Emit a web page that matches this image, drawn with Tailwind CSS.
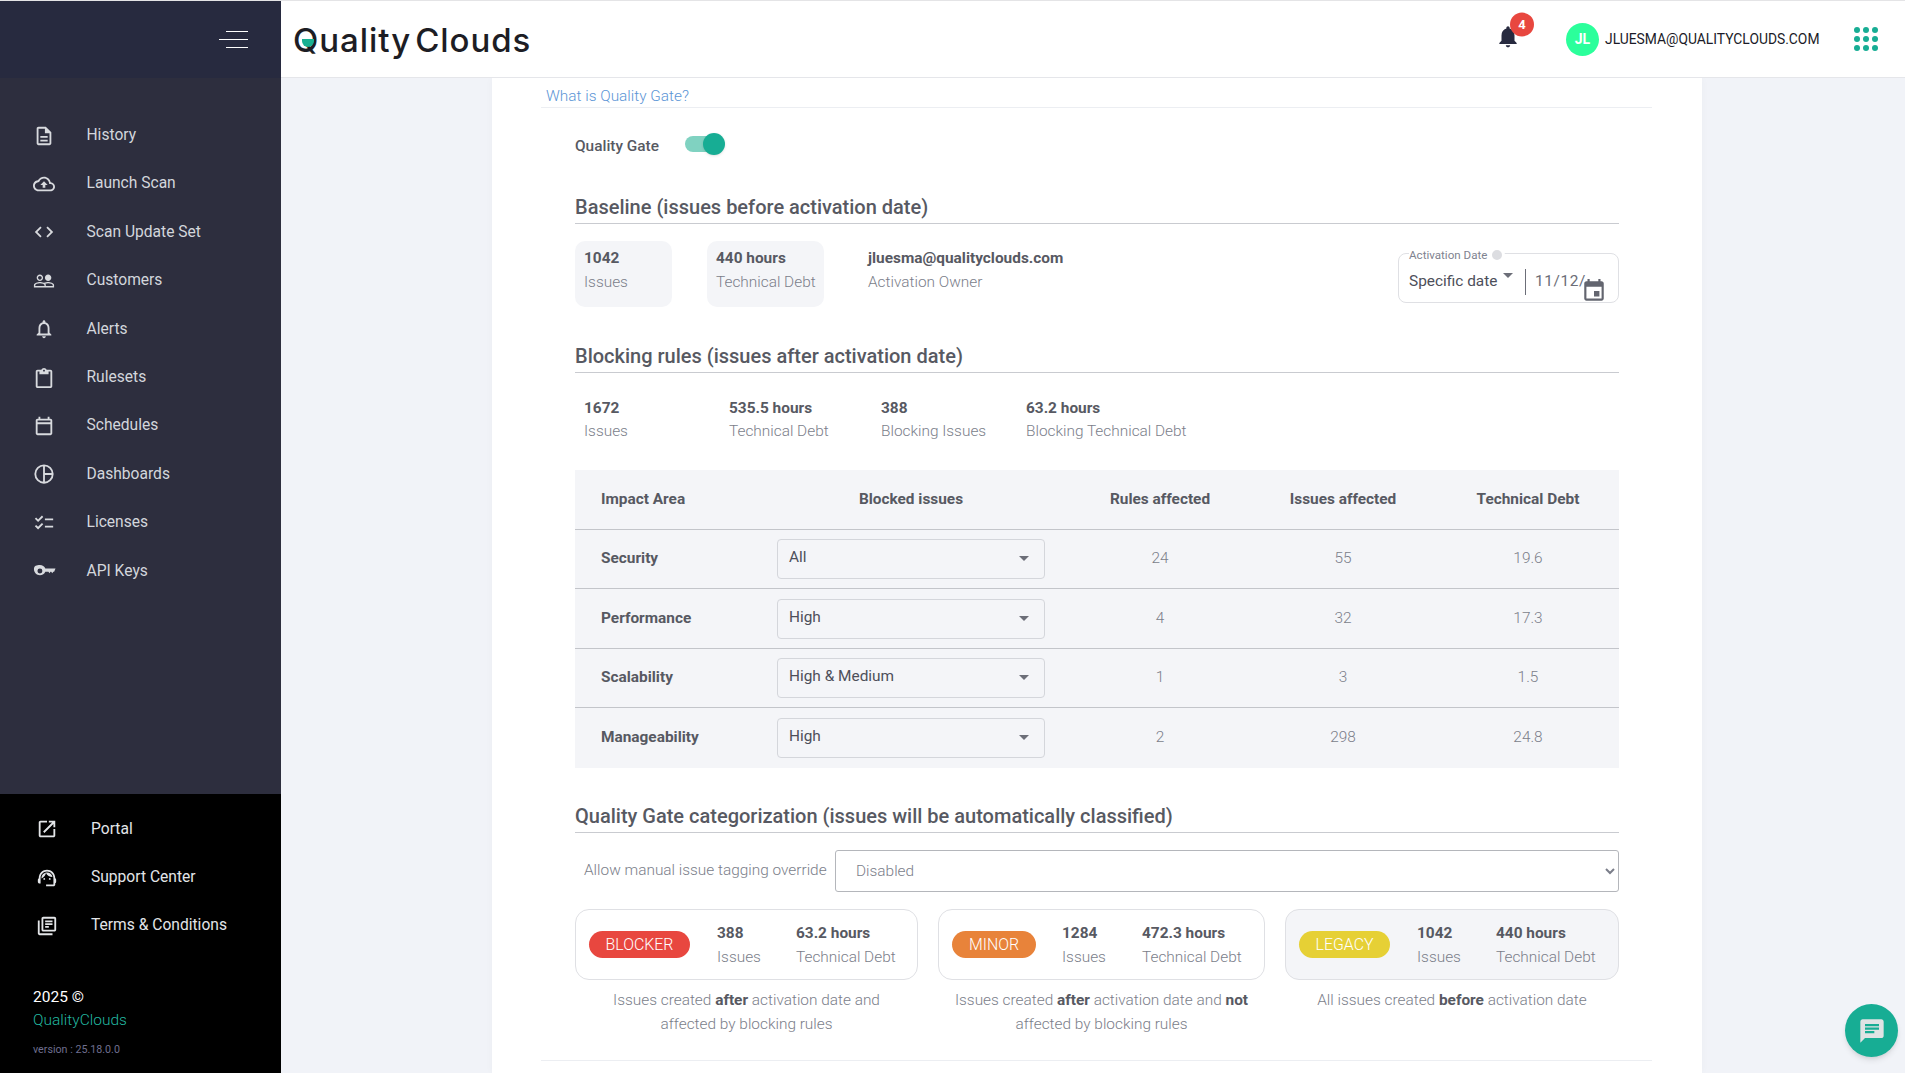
<!DOCTYPE html>
<html lang="en">
<head>
<meta charset="utf-8">
<title>Quality Gate</title>
<script src="https://cdn.jsdelivr.net/npm/@tailwindcss/browser@4"></script>
</head>
<body class="m-0 font-['Roboto',sans-serif]">
<div class="relative w-[1905px] h-[1073px] overflow-hidden flex border-t border-[#e4e4e6] bg-[#f1f3f8]">
  <aside class="w-[281px] shrink-0 flex flex-col">
    <div class="h-[77px] bg-[#272a3f] flex items-center justify-end pr-[33px]">
      <div class="flex flex-col items-end gap-[7px] w-[29px]">
        <span class="block h-px w-[22px] bg-white"></span>
        <span class="block h-px w-[29px] bg-white"></span>
        <span class="block h-px w-[22px] bg-white"></span>
      </div>
    </div>
    <nav class="flex-1 bg-[#2d2e3e] pt-[33.5px] text-[15.6px] text-[#d3d6dc]">
      <a class="flex items-center h-[48.4px] pl-[33px] gap-[31.5px]"><svg class="w-[22px] h-[22px]" viewBox="0 0 24 24" fill="#d8dade"><path d="M8 16h8v2H8zm0-4h8v2H8zm6-10H6c-1.1 0-2 .9-2 2v16c0 1.1.89 2 1.99 2H18c1.1 0 2-.9 2-2V8l-6-6zm4 18H6V4h7v5h5v11z"/></svg>History</a>
      <a class="flex items-center h-[48.4px] pl-[33px] gap-[31.5px]"><svg class="w-[22px] h-[22px]" viewBox="0 0 24 24" fill="#d8dade"><path d="M19.35 10.04C18.67 6.59 15.64 4 12 4 9.11 4 6.6 5.64 5.35 8.04 2.34 8.36 0 10.91 0 14c0 3.31 2.69 6 6 6h13c2.76 0 5-2.24 5-5 0-2.64-2.05-4.78-4.65-4.96zM19 18H6c-2.21 0-4-1.79-4-4 0-2.05 1.53-3.76 3.56-3.97l1.07-.11.5-.95C8.08 7.14 9.94 6 12 6c2.62 0 4.88 1.86 5.39 4.43l.3 1.5 1.53.11c1.56.1 2.78 1.41 2.78 2.96 0 1.65-1.35 3-3 3zM8 13h2.55v3h2.9v-3H16l-4-4z"/></svg>Launch Scan</a>
      <a class="flex items-center h-[48.4px] pl-[33px] gap-[31.5px]"><svg class="w-[22px] h-[22px]" viewBox="0 0 24 24" fill="#d8dade"><path d="M9.4 16.6L4.8 12l4.6-4.6L8 6l-6 6 6 6 1.4-1.4zm5.2 0l4.6-4.6-4.6-4.6L16 6l6 6-6 6-1.4-1.4z"/></svg>Scan Update Set</a>
      <a class="flex items-center h-[48.4px] pl-[33px] gap-[31.5px]"><svg class="w-[22px] h-[22px]" viewBox="0 0 24 24" fill="#d8dade"><path d="M16.5 13c-1.2 0-3.07.34-4.5 1-1.43-.67-3.3-1-4.5-1C5.33 13 1 14.08 1 16.25V19h22v-2.75c0-2.17-4.33-3.25-6.5-3.25zm-4 4.500h-10v-1.250c0-.54 2.560-1.750 5-1.750s5 1.210 5 1.750v1.250zm9 0H14v-1.250c0-.46-.2-.86-.52-1.220.88-.3 1.960-.53 3.020-.53 2.440 0 5 1.210 5 1.750v1.250zM7.500 12c1.930 0 3.500-1.570 3.500-3.500S9.430 5 7.500 5 4 6.570 4 8.500 5.570 12 7.500 12zm0-5.500c1.100 0 2 .9 2 2s-.9 2-2 2-2-.9-2-2 .9-2 2-2zm9 5.500c1.930 0 3.500-1.570 3.500-3.500S18.430 5 16.500 5 13 6.570 13 8.500s1.570 3.500 3.500 3.500z"/></svg>Customers</a>
      <a class="flex items-center h-[48.4px] pl-[33px] gap-[31.5px]"><svg class="w-[22px] h-[22px]" viewBox="0 0 24 24" fill="#d8dade"><path d="M12 22c1.1 0 2-.9 2-2h-4c0 1.1.89 2 2 2zm6-6v-5c0-3.07-1.64-5.64-4.5-6.32V4c0-.83-.67-1.5-1.5-1.5s-1.5.67-1.5 1.5v.68C7.63 5.36 6 7.92 6 11v5l-2 2v1h16v-1l-2-2zm-2 1H8v-6c0-2.48 1.51-4.5 4-4.5s4 2.02 4 4.5v6z"/></svg>Alerts</a>
      <a class="flex items-center h-[48.4px] pl-[33px] gap-[31.5px]"><svg class="w-[22px] h-[22px]" viewBox="0 0 24 24" fill="#d8dade"><path d="M19 3h-4.18C14.4 1.84 13.3 1 12 1s-2.4.84-2.82 2H5c-1.1 0-2 .9-2 2v16c0 1.1.9 2 2 2h14c1.1 0 2-.9 2-2V5c0-1.1-.9-2-2-2zm0 18H5V5h2v3h10V5h2v16zM12 3c.55 0 1 .45 1 1s-.45 1-1 1-1-.45-1-1 .45-1 1-1z"/></svg>Rulesets</a>
      <a class="flex items-center h-[48.4px] pl-[33px] gap-[31.5px]"><svg class="w-[22px] h-[22px]" viewBox="0 0 24 24" fill="#d8dade"><path d="M19 4h-1V2h-2v2H8V2H6v2H5c-1.1 0-2 .9-2 2v14c0 1.1.9 2 2 2h14c1.1 0 2-.9 2-2V6c0-1.1-.9-2-2-2zm0 16H5V10h14v10zm0-12H5V6h14v2z"/></svg>Schedules</a>
      <a class="flex items-center h-[48.4px] pl-[33px] gap-[31.5px]"><svg class="w-[22px] h-[22px]" viewBox="0 0 24 24" fill="none" stroke="#d8dade" stroke-width="2"><circle cx="12" cy="12" r="9.5"/><path d="M12 2.500v19M12 12h9.500"/></svg>Dashboards</a>
      <a class="flex items-center h-[48.4px] pl-[33px] gap-[31.5px]"><svg class="w-[22px] h-[22px]" viewBox="0 0 24 24" fill="#d8dade"><path d="M22 7h-9v2h9V7zm0 8h-9v2h9v-2zM5.54 11L2 7.46l1.41-1.41 2.12 2.12 4.24-4.24 1.41 1.41L5.54 11zm0 8L2 15.46l1.41-1.41 2.12 2.12 4.24-4.24 1.41 1.41L5.54 19z"/></svg>Licenses</a>
      <a class="flex items-center h-[48.4px] pl-[33px] gap-[31.5px]"><svg class="w-[23px] h-[22px]" viewBox="0 0 24 24" fill="#d8dade"><path fill-rule="evenodd" d="M7 5.500c2.700 0 5 1.500 5.900 3.700H24l-1.500 3.600H21.500l-1 1.700-1.200-1.700h-.8l-1 1.700-1.200-1.700h-3.400c-.9 2.200-3.200 3.700-5.900 3.700-3.600 0-6.500-2.900-6.500-6.500S3.400 5.500 7 5.500zm0 3.800a2.700 2.700 0 1 0 0 5.400 2.700 2.700 0 0 0 0-5.400z"/></svg><span class="-ml-px">API Keys</span></a>
    </nav>
    <div class="h-[279px] bg-black pt-[11px] text-[#e3e5e8] text-[15.6px]">
      <a class="flex items-center h-[48.4px] pl-[36px] gap-[33px]"><svg class="w-[22px] h-[22px]" viewBox="0 0 24 24" fill="#e3e5e8"><path d="M19 19H5V5h7V3H5c-1.11 0-2 .9-2 2v14c0 1.1.89 2 2 2h14c1.1 0 2-.9 2-2v-7h-2v7zM14 3v2h3.590l-9.830 9.830 1.410 1.410L19 6.410V10h2V3h-7z"/></svg>Portal</a>
      <a class="flex items-center h-[48.4px] pl-[36px] gap-[33px]"><svg class="w-[22px] h-[22px]" viewBox="0 0 24 24" fill="#e3e5e8"><path d="M21 12.220C21 6.730 16.740 3 12 3c-4.690 0-9 3.650-9 9.280-.6.340-1 .980-1 1.720v2c0 1.100.9 2 2 2h1v-6.100c0-3.870 3.130-7 7-7s7 3.130 7 7V19h-8v2h8c1.100 0 2-.9 2-2v-1.220c.590-.310 1-.920 1-1.640v-2.300c0-.7-.410-1.310-1-1.620z"/><circle cx="9" cy="13" r="1"/><circle cx="15" cy="13" r="1"/><path d="M18 11.030C17.520 8.180 15.040 6 12.050 6c-3.030 0-6.290 2.510-6.030 6.450 2.470-1.010 4.330-3.210 4.860-5.890 1.310 2.630 4 4.440 7.120 4.470z"/></svg>Support Center</a>
      <a class="flex items-center h-[48.4px] pl-[36px] gap-[33px]"><svg class="w-[22px] h-[22px]" viewBox="0 0 24 24" fill="#e3e5e8"><path d="M4 6H2v14c0 1.100.9 2 2 2h14v-2H4V6zm16-4H8c-1.100 0-2 .9-2 2v12c0 1.100.9 2 2 2h12c1.100 0 2-.9 2-2V4c0-1.100-.9-2-2-2zm0 14H8V4h12v12zM10 9h8v2h-8zm0 3h4v2h-4zm0-6h8v2h-8z"/></svg>Terms &amp; Conditions</a>
      <div class="pl-[33px] mt-[36px] text-[15.5px] leading-[23px] text-white">2025 ©</div>
      <div class="pl-[33px] text-[15.5px] leading-[23px] font-light text-[#22b8a0]">QualityClouds</div>
      <div class="pl-[33px] mt-[10px] text-[10.7px] leading-[16px] text-[#6f6f8f]">version : 25.18.0.0</div>
    </div>
  </aside>

  <div class="flex-1 flex flex-col min-w-0">
    <header class="relative z-10 h-[77px] shrink-0 bg-white border-b border-[#e5e6ea] flex items-center pl-[12px]">
      <div class="relative mt-[2px] font-['Inter',sans-serif] font-medium text-[33px] tracking-[0.95px] text-[#1d1d24] leading-none">
        Quality<span class="ml-[4px]">Clouds</span>
        <span class="absolute left-[9px] top-[15px] w-[12px] h-[8px] rounded-b-[8px] bg-[#19b092]"></span>
      </div>
      <div class="ml-auto flex items-center">
        <div class="relative w-[24px] h-[24px] mr-[47px] -translate-y-[3.5px]">
          <svg class="w-[26px] h-[26px]" viewBox="0 0 24 24" fill="#272a3f"><path d="M12 22c1.100 0 2-.9 2-2h-4c0 1.100.89 2 2 2zm6-6v-5c0-3.070-1.640-5.640-4.500-6.320V4c0-.83-.67-1.500-1.500-1.500s-1.500.67-1.500 1.500v.68C7.630 5.360 6 7.920 6 11v5l-2 2v1h16v-1l-2-2z"/></svg>
          <span class="absolute left-[15px] top-[-11px] w-[24px] h-[24px] rounded-full bg-[#e8473f] text-white text-[13px] font-bold flex items-center justify-center">4</span>
        </div>
        <div class="w-[33px] h-[33px] rounded-full bg-[#2bff9b] text-white text-[14px] font-bold flex items-center justify-center">JL</div>
        <span class="ml-[6px] text-[13.85px] text-[#1b1b28] w-[215px]">JLUESMA@QUALITYCLOUDS.COM</span>
        <div class="ml-[34px] mr-[27px] grid grid-cols-3 gap-[3px] w-[24px]">
          <i class="w-[6px] h-[6px] rounded-full bg-[#17ad94]"></i><i class="w-[6px] h-[6px] rounded-full bg-[#17ad94]"></i><i class="w-[6px] h-[6px] rounded-full bg-[#17ad94]"></i>
          <i class="w-[6px] h-[6px] rounded-full bg-[#17ad94]"></i><i class="w-[6px] h-[6px] rounded-full bg-[#17ad94]"></i><i class="w-[6px] h-[6px] rounded-full bg-[#17ad94]"></i>
          <i class="w-[6px] h-[6px] rounded-full bg-[#17ad94]"></i><i class="w-[6px] h-[6px] rounded-full bg-[#17ad94]"></i><i class="w-[6px] h-[6px] rounded-full bg-[#17ad94]"></i>
        </div>
      </div>
    </header>

    <main class="flex-1 min-h-0 overflow-hidden pl-[211px]">
      <div class="w-[1210px] h-full bg-white pl-[49px] pr-[50px] text-[15.4px] text-[#575962] shadow-[0_0_8px_rgba(0,0,0,0.03)]">
        <div class="h-[30px] border-b border-[#eceef2] pl-[5px] pt-[8px] leading-[20px] font-light text-[#5b95d6]">What is Quality Gate?</div>
        <div class="ml-[34px] mr-[33px]">
          <div class="flex items-center h-[22px] mt-[25px] font-medium">
            <span class="w-[110px] mt-[5px]">Quality Gate</span>
            <span class="relative block w-[38px] h-[16px] rounded-full bg-[#80d2c1]"><span class="absolute right-[-2px] top-[-3px] w-[22px] h-[22px] rounded-full bg-[#17ad94] shadow-sm"></span></span>
          </div>

          <h2 class="mt-[36px] h-[33px] border-b border-[#c9cbd0] text-[20px] font-medium leading-[32px] text-[#575962]">Baseline (issues before activation date)</h2>
          <div class="relative flex items-start mt-[17px] h-[66px]">
            <div class="w-[97px] h-[66px] rounded-[10px] bg-[#f4f5f8] pl-[9px] pt-[6px]"><b class="block font-bold leading-[23px]">1042</b><span class="block font-light text-[#7b7e8a] leading-[24px]">Issues</span></div>
            <div class="ml-[35px] w-[117px] h-[66px] rounded-[10px] bg-[#f4f5f8] pl-[9px] pt-[6px]"><b class="block font-bold leading-[23px]">440 hours</b><span class="block font-light text-[#7b7e8a] leading-[24px]">Technical Debt</span></div>
            <div class="ml-[44px] pt-[6px]"><b class="block font-bold leading-[23px]">jluesma@qualityclouds.com</b><span class="block font-light text-[#7b7e8a] leading-[24px]">Activation Owner</span></div>
            <div class="absolute right-0 top-[12px] w-[221px] h-[50px] rounded-[8px] border border-[#dfe0e4] flex items-center pl-[10px]">
              <span class="absolute left-[10px] top-[-6px] bg-white pr-[4px] text-[11.6px] leading-[14px] text-[#808390]">Activation Date</span>
              <span class="absolute left-[93px] top-[-4px] w-[10px] h-[10px] rounded-full bg-[#dcdde1] border-[3px] border-white box-content -translate-x-[3px] -translate-y-[3px]"></span>
              <span class="text-[#4d4f5a] w-[116px] mt-[8px]">Specific date</span>
              <span class="absolute left-[104px] top-[19px] border-x-[5px] border-x-transparent border-t-[5px] border-t-[#6c6e78]"></span>
              <span class="block w-px h-[26px] bg-[#6c6e78] mt-[8px]"></span>
              <span class="ml-[9px] mt-[8px] text-[#6c6e78] tracking-[0.6px]">11/12/</span>
              <svg class="absolute right-[11px] top-[24px] w-[26px] h-[26px]" viewBox="0 0 24 24" fill="#63656f"><path d="M17 12h-5v5h5v-5zM16 1v2H8V1H6v2H5c-1.110 0-1.990.9-1.990 2L3 19c0 1.100.89 2 2 2h14c1.100 0 2-.9 2-2V5c0-1.100-.9-2-2-2h-1V1h-2zm3 18H5V8h14v11z"/></svg>
            </div>
          </div>

          <h2 class="mt-[33px] h-[33px] border-b border-[#c9cbd0] text-[20px] font-medium leading-[32px] text-[#575962]">Blocking rules (issues after activation date)</h2>
          <div class="flex mt-[24px] h-[48px] pl-[9px]">
            <div class="w-[145px]"><b class="block font-bold leading-[23px]">1672</b><span class="block font-light text-[#7b7e8a] leading-[23px]">Issues</span></div>
            <div class="w-[152px]"><b class="block font-bold leading-[23px]">535.5 hours</b><span class="block font-light text-[#7b7e8a] leading-[23px]">Technical Debt</span></div>
            <div class="w-[145px]"><b class="block font-bold leading-[23px]">388</b><span class="block font-light text-[#7b7e8a] leading-[23px]">Blocking Issues</span></div>
            <div><b class="block font-bold leading-[23px]">63.2 hours</b><span class="block font-light text-[#7b7e8a] leading-[23px]">Blocking Technical Debt</span></div>
          </div>

          <div class="mt-[25px] bg-[#f4f5f8]">
            <div class="grid grid-cols-[192px_288px_210px_156px_198px] items-center h-[60px] font-bold border-b border-[#c3c5ca]">
              <span class="pl-[26px]">Impact Area</span><span class="text-center">Blocked issues</span><span class="text-center">Rules affected</span><span class="text-center">Issues affected</span><span class="text-center pl-[16px]">Technical Debt</span>
            </div>
            <div class="grid grid-cols-[192px_288px_210px_156px_198px] items-center h-[59px] font-light text-[#7b7e8a] border-b border-[#c3c5ca]">
              <b class="pl-[26px] font-bold text-[#575962]">Security</b>
              <div class="relative mx-[10px] h-[40px] w-[268px] rounded-[4px] border border-[#d4d6db] pl-[11px] pt-[7px] font-normal text-[#4d4f5a] leading-[20px]">All<span class="absolute right-[15px] top-[16px] border-x-[5px] border-x-transparent border-t-[5px] border-t-[#6c6e78]"></span></div>
              <span class="text-center">24</span><span class="text-center">55</span><span class="text-center pl-[16px]">19.6</span>
            </div>
            <div class="grid grid-cols-[192px_288px_210px_156px_198px] items-center h-[60px] font-light text-[#7b7e8a] border-b border-[#c3c5ca]">
              <b class="pl-[26px] font-bold text-[#575962]">Performance</b>
              <div class="relative mx-[10px] h-[40px] w-[268px] rounded-[4px] border border-[#d4d6db] pl-[11px] pt-[7px] font-normal text-[#4d4f5a] leading-[20px]">High<span class="absolute right-[15px] top-[16px] border-x-[5px] border-x-transparent border-t-[5px] border-t-[#6c6e78]"></span></div>
              <span class="text-center">4</span><span class="text-center">32</span><span class="text-center pl-[16px]">17.3</span>
            </div>
            <div class="grid grid-cols-[192px_288px_210px_156px_198px] items-center h-[59px] font-light text-[#7b7e8a] border-b border-[#c3c5ca]">
              <b class="pl-[26px] font-bold text-[#575962]">Scalability</b>
              <div class="relative mx-[10px] h-[40px] w-[268px] rounded-[4px] border border-[#d4d6db] pl-[11px] pt-[7px] font-normal text-[#4d4f5a] leading-[20px]">High &amp; Medium<span class="absolute right-[15px] top-[16px] border-x-[5px] border-x-transparent border-t-[5px] border-t-[#6c6e78]"></span></div>
              <span class="text-center">1</span><span class="text-center">3</span><span class="text-center pl-[16px]">1.5</span>
            </div>
            <div class="grid grid-cols-[192px_288px_210px_156px_198px] items-center h-[60px] font-light text-[#7b7e8a]">
              <b class="pl-[26px] font-bold text-[#575962]">Manageability</b>
              <div class="relative mx-[10px] h-[40px] w-[268px] rounded-[4px] border border-[#d4d6db] pl-[11px] pt-[7px] font-normal text-[#4d4f5a] leading-[20px]">High<span class="absolute right-[15px] top-[16px] border-x-[5px] border-x-transparent border-t-[5px] border-t-[#6c6e78]"></span></div>
              <span class="text-center">2</span><span class="text-center">298</span><span class="text-center pl-[16px]">24.8</span>
            </div>
          </div>

          <h2 class="mt-[32px] h-[33px] border-b border-[#c9cbd0] text-[20px] font-medium leading-[32px] text-[#575962]">Quality Gate categorization (issues will be automatically classified)</h2>
          <div class="flex items-center mt-[17px] h-[42px] pl-[9px]">
            <span class="w-[251px] font-light text-[#7b7e8a]">Allow manual issue tagging override</span>
            <select class="flex-1 h-[42px] rounded-[3px] border border-[#b4b6bb] bg-white pl-[16px] font-light text-[#7b7e8a]"><option>Disabled</option></select>
          </div>

          <div class="grid grid-cols-[343px_327px_334px] gap-x-[20px] mt-[17px]">
            <div class="flex items-center h-[71px] rounded-[14px] border border-[#dfe0e4] pl-[13px]">
              <span class="w-[101px] h-[27px] rounded-full bg-[#e8473f] text-white text-[15.9px] font-light flex items-center justify-center">BLOCKER</span>
              <div class="ml-[27px] w-[79px] pt-[2px]"><b class="block font-bold leading-[23px]">388</b><span class="block font-light text-[#7b7e8a] leading-[24px]">Issues</span></div>
              <div class="pt-[2px]"><b class="block font-bold leading-[23px]">63.2 hours</b><span class="block font-light text-[#7b7e8a] leading-[24px]">Technical Debt</span></div>
            </div>
            <div class="flex items-center h-[71px] rounded-[14px] border border-[#dfe0e4] pl-[13px]">
              <span class="w-[84px] h-[27px] rounded-full bg-[#e8833a] text-white text-[15.9px] font-light flex items-center justify-center">MINOR</span>
              <div class="ml-[26px] w-[80px] pt-[2px]"><b class="block font-bold leading-[23px]">1284</b><span class="block font-light text-[#7b7e8a] leading-[24px]">Issues</span></div>
              <div class="pt-[2px]"><b class="block font-bold leading-[23px]">472.3 hours</b><span class="block font-light text-[#7b7e8a] leading-[24px]">Technical Debt</span></div>
            </div>
            <div class="flex items-center h-[71px] rounded-[14px] border border-[#dfe0e4] bg-[#f4f5f8] pl-[13px]">
              <span class="w-[91px] h-[27px] rounded-full bg-[#e6d035] text-white text-[15.9px] font-light flex items-center justify-center">LEGACY</span>
              <div class="ml-[27px] w-[79px] pt-[2px]"><b class="block font-bold leading-[23px]">1042</b><span class="block font-light text-[#7b7e8a] leading-[24px]">Issues</span></div>
              <div class="pt-[2px]"><b class="block font-bold leading-[23px]">440 hours</b><span class="block font-light text-[#7b7e8a] leading-[24px]">Technical Debt</span></div>
            </div>
            <p class="mt-[8px] px-[20px] text-center font-light text-[#7b7e8a] leading-[24px]">Issues created <b class="font-bold text-[#575962]">after</b> activation date and affected by blocking rules</p>
            <p class="mt-[8px] px-[10px] text-center font-light text-[#7b7e8a] leading-[24px]">Issues created <b class="font-bold text-[#575962]">after</b> activation date and <b class="font-bold text-[#575962]">not</b> affected by blocking rules</p>
            <p class="mt-[8px] px-[10px] text-center font-light text-[#7b7e8a] leading-[24px]">All issues created <b class="font-bold text-[#575962]">before</b> activation date</p>
          </div>
        </div>
        <div class="mt-[24px] border-b border-[#eceef2]"></div>
      </div>
    </main>
  </div>

  <button class="absolute right-[7px] top-[1003px] w-[53px] h-[53px] rounded-full bg-[#17ad94] shadow-md flex items-center justify-center"><svg class="w-[28px] h-[28px]" viewBox="0 0 24 24" fill="#dfe3e4"><path d="M20 2H4c-1.100 0-1.990.9-1.990 2L2 22l4-4h14c1.100 0 2-.9 2-2V4c0-1.100-.9-2-2-2zM6 9h12v2H6V9zm8 5H6v-2h8v2zm4-6H6V6h12v2z"/></svg></button>
</div>
</body>
</html>
